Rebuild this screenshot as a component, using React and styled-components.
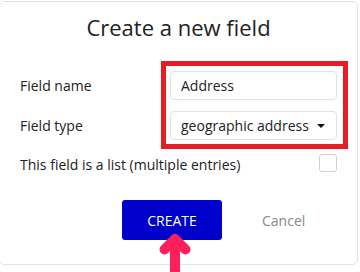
import React from "react";
import styled, { createGlobalStyle } from "styled-components";

const GlobalStyle = createGlobalStyle`
  body {
    margin: 0;
    background: #ffffff;
    font-family: "Open Sans", "Liberation Sans", sans-serif;
    color: #222222;
  }
`;

const App = () => {
  return (
    <Page>
      <GlobalStyle />
      <Card>
        <Title>Create a new field</Title>
        <FieldsRow>
          <Labels>
            <Label>Field name</Label>
            <Label>Field type</Label>
          </Labels>
          <Highlight>
            <Input>Address</Input>
            <Select>
              <span>geographic address</span>
              <Caret />
            </Select>
          </Highlight>
        </FieldsRow>
        <ListRow>
          <ListLabel>This field is a list (multiple entries)</ListLabel>
          <Checkbox />
        </ListRow>
        <Footer>
          <CreateButton>CREATE</CreateButton>
          <CancelButton>Cancel</CancelButton>
        </Footer>
      </Card>
      <Arrow width="34" height="43" viewBox="0 0 34 43">
        <path
          d="M16 10 L16 48 M5.5 20.5 L16 10 L26.5 20.5"
          fill="none"
          stroke="#ff1f5a"
          strokeWidth="10"
          strokeLinecap="round"
          strokeLinejoin="round"
        />
      </Arrow>
    </Page>
  );
};

const Page = styled.div`
  position: relative;
  width: 360px;
  height: 272px;
  overflow: hidden;
`;

const Card = styled.div`
  box-sizing: border-box;
  width: 359px;
  height: 264px;
  margin: 1px 0 0 -1px;
  border: 1px solid #e4e4e4;
  border-radius: 5px;
  padding: 9px 9px 0 20px;
  background: #ffffff;
`;

const Title = styled.div`
  text-align: center;
  font-size: 22px;
  line-height: 32px;
  color: #222222;
  padding-right: 11px;
`;

const FieldsRow = styled.div`
  display: flex;
  margin-top: 18px;
`;

const Labels = styled.div`
  flex-shrink: 0;
  display: flex;
  flex-direction: column;
  gap: 11px;
  width: 141px;
  padding-top: 10px;
`;

const Label = styled.div`
  font-size: 14px;
  line-height: 30px;
  height: 29px;
`;

const Highlight = styled.div`
  flex-shrink: 0;
  box-sizing: border-box;
  width: 187px;
  height: 88px;
  border: 5px solid #e81c24;
  padding: 5px 6px 0 4px;
  display: flex;
  flex-direction: column;
  gap: 11px;
`;

const Input = styled.div`
  box-sizing: border-box;
  height: 29px;
  border: 1px solid #e2e2e2;
  border-radius: 4px;
  padding: 0 10px;
  font-size: 14px;
  line-height: 28px;
  color: #222222;
`;

const Select = styled(Input)`
  display: flex;
  align-items: center;
  justify-content: space-between;
  padding-right: 11px;
`;

const Caret = styled.span`
  width: 0;
  height: 0;
  border-left: 4px solid transparent;
  border-right: 4px solid transparent;
  border-top: 4px solid #111111;
  margin-top: 1px;
`;

const ListRow = styled.div`
  display: flex;
  align-items: center;
  justify-content: space-between;
  margin-top: 5px;
  height: 18px;
  padding-right: 11px;
`;

const ListLabel = styled.div`
  font-size: 14px;
  line-height: 18px;
  padding-top: 4px;
`;

const Checkbox = styled.div`
  box-sizing: border-box;
  width: 18px;
  height: 18px;
  border: 1px solid #d0d0d0;
  border-radius: 3px;
`;

const Footer = styled.div`
  display: flex;
  align-items: center;
  margin-top: 28px;
  padding-left: 102px;
`;

const CreateButton = styled.button`
  width: 100px;
  height: 40px;
  border: none;
  border-radius: 3px;
  background: #0000cc;
  color: #ffffff;
  font-family: "Open Sans", "Liberation Sans", sans-serif;
  font-size: 14px;
  padding: 0;
`;

const CancelButton = styled.button`
  border: none;
  background: none;
  padding: 0;
  margin-left: 40px;
  color: #8a8a8a;
  font-family: "Open Sans", "Liberation Sans", sans-serif;
  font-size: 14px;
`;

const Arrow = styled.svg`
  position: absolute;
  left: 159px;
  top: 229px;
`;

export default App;
